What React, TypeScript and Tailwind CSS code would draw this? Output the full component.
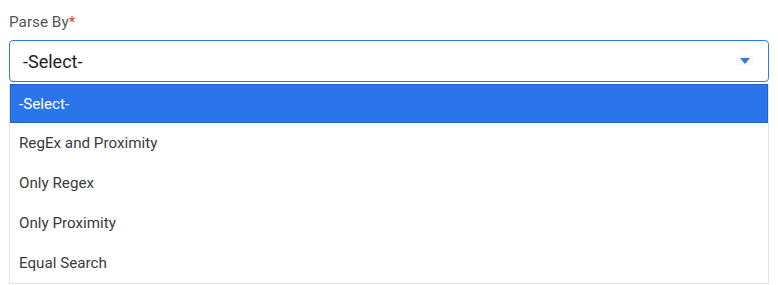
import * as React from "react"

const options = ["-Select-", "RegEx and Proximity", "Only Regex", "Only Proximity", "Equal Search"]

export default function App() {
  const selected = 0

  return (
    <div className="w-[778px] h-[285px] bg-white pl-[9px] pr-[9px] pt-[12px] font-['Roboto',sans-serif]">
      <label className="block text-[15.3px] leading-[20px] text-[#555]">
        Parse By<span className="text-[#e53935]">*</span>
      </label>
      <div className="mt-[8px] w-[760px]">
        {/* Select box */}
        <div className="flex items-center justify-between h-[42px] border border-[#2f7ae5] rounded-[4px] pl-[13px] pr-[15px]">
          <span className="text-[18px] text-[#222]">-Select-</span>
          <span className="flex items-center justify-center w-[16px] h-[10px] bg-[#fafafa]">
            <svg width="10" height="6" viewBox="0 0 10 6">
              <path d="M0 0 L10 0 L5 6 Z" fill="#2f7ae5" />
            </svg>
          </span>
        </div>
        {/* Options list */}
        <ul className="mt-[2px] border border-t-0 border-[#e4e4e4]">
          {options.map((opt, i) => (
            <li
              key={opt}
              className={
                i === selected
                  ? "h-[39px] flex items-center pt-[1px] px-[8px] bg-[#2b74e9] border border-[#1f62d0] text-white text-[15.2px]"
                  : "h-[40px] flex items-center pt-[1px] px-[9px] text-[#3b3b3b] text-[15.2px]"
              }
            >
              {opt}
            </li>
          ))}
        </ul>
      </div>
    </div>
  )
}
